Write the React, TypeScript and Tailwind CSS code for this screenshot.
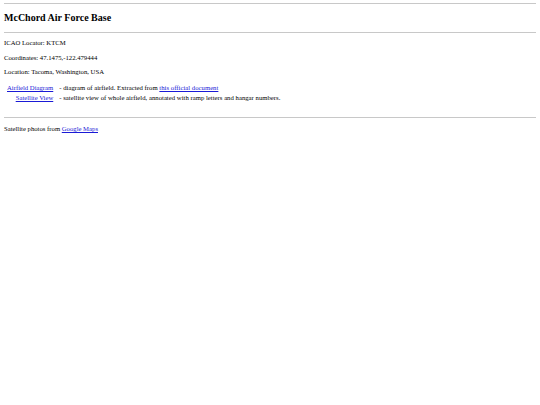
import React from 'react';

const Link: React.FC<{ children: React.ReactNode }> = ({ children }) => (
  <a href="#" className="text-[#1a1ad6] underline">
    {children}
  </a>
);

export default function App() {
  return (
    <div className="min-h-screen bg-white px-[4px] text-[6.7px] leading-[8px] text-black [font-family:'Liberation_Serif','Times_New_Roman',serif]">
      <div className="h-[3px]" />
      <hr className="border-t border-[#c8c8c8]" />
      <h3 className="mt-[8px] text-[10px] leading-[12px] font-bold">McChord Air Force Base</h3>
      <hr className="mt-[8px] border-t border-[#c8c8c8]" />
      <p className="mt-[6px]">ICAO Locator: KTCM</p>
      <p className="mt-[7px]">Coordinates: 47.1475,-122.479444</p>
      <p className="mt-[6px]">Location: Tacoma, Washington, USA</p>

      {/* airfield links */}
      <table className="mt-[7px] ml-[1px] border-separate border-spacing-x-[1px] border-spacing-y-0">
        <tbody>
          <tr>
            <td className="px-[1px] py-[1px] text-right">
              <Link>Airfield Diagram</Link>
            </td>
            <td className="pl-[4px] py-[1px] tracking-[0.02px]">
              - diagram of airfield. Extracted from <Link>this official document</Link>
            </td>
          </tr>
          <tr>
            <td className="px-[1px] py-[1px] text-right">
              <Link>Satellite View</Link>
            </td>
            <td className="pl-[4px] py-[1px] tracking-[0.02px]">
              - satellite view of whole airfield, annotated with ramp letters and hangar numbers.
            </td>
          </tr>
        </tbody>
      </table>

      <hr className="mt-[14px] border-t border-[#c8c8c8]" />
      <p className="mt-[7px]">
        Satellite photos from <Link>Google Maps</Link>
      </p>
    </div>
  );
}
